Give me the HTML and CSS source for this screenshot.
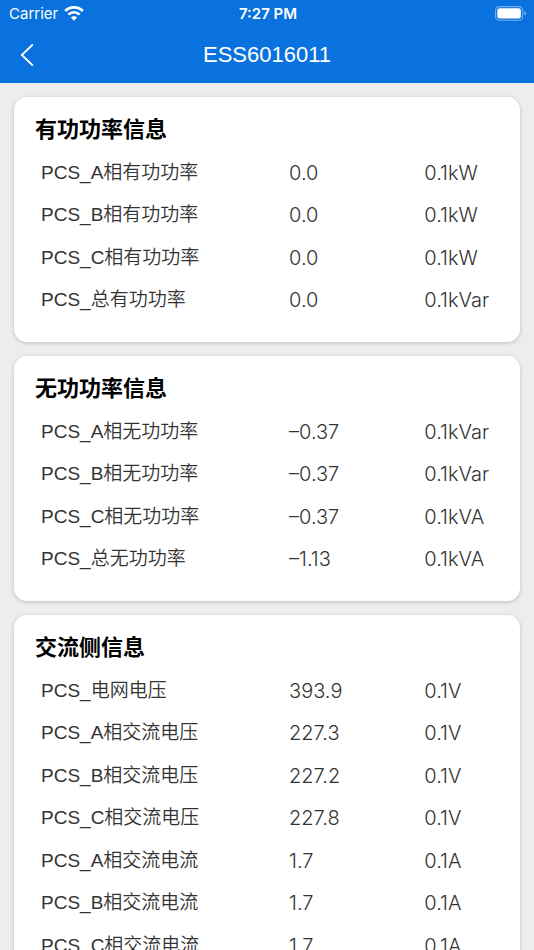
FILE: index.html
```
<!DOCTYPE html>
<html lang="zh-CN">
<head>
    <meta charset="UTF-8">
    <meta name="viewport" content="width=device-width, initial-scale=1.0">
    <title>ESS6016011</title>
    <link rel="stylesheet" href="styles.css">
</head>
<body>
    <header class="header">
        <div class="status-bar">
            <div class="status-left">
                <span>Carrier</span>
                <svg class="wifi" viewBox="0 0 20 15" width="20" height="15" aria-hidden="true">
                    <path d="M1.2 5.1a12.4 12.4 0 0 1 17.6 0" fill="none" stroke="#fff" stroke-width="2.8"/>
                    <path d="M4.4 8.6a7.9 7.9 0 0 1 11.2 0" fill="none" stroke="#fff" stroke-width="2.6"/>
                    <path d="M10 14.8L6.9 11.6a4.4 4.4 0 0 1 6.2 0z" fill="#fff"/>
                </svg>
            </div>
            <span class="status-time">7:27 PM</span>
            <div class="status-right">
                <svg class="battery" viewBox="0 0 32 15" width="32" height="15" aria-hidden="true">
                    <rect x="0.6" y="0.6" width="27" height="13.6" rx="3.8" fill="none" stroke="#fff" stroke-opacity="0.45" stroke-width="1.1"/>
                    <rect x="2.3" y="2.3" width="23.6" height="10.2" rx="2.3" fill="#fff"/>
                    <path d="M29.3 5.2c1 .4 1.6 1.2 1.6 2.2s-.6 1.8-1.6 2.2z" fill="#fff" fill-opacity="0.5"/>
                </svg>
            </div>
        </div>
        <div class="nav-bar">
            <button type="button" class="back" aria-label="返回">
                <svg viewBox="0 0 14 24" width="14" height="24" aria-hidden="true">
                    <path d="M12.8 1.5L1.8 12l11 10.5" fill="none" stroke="#fff" stroke-width="1.8"/>
                </svg>
            </button>
            <h1 class="nav-title">ESS6016011</h1>
        </div>
    </header>
    <main class="content">
        <section class="card">
            <h2>有功功率信息</h2>
            <table>
                <tr><th scope="row">PCS_A相有功功率</th><td>0.0</td><td>0.1kW</td></tr>
                <tr><th scope="row">PCS_B相有功功率</th><td>0.0</td><td>0.1kW</td></tr>
                <tr><th scope="row">PCS_C相有功功率</th><td>0.0</td><td>0.1kW</td></tr>
                <tr><th scope="row">PCS_总有功功率</th><td>0.0</td><td>0.1kVar</td></tr>
            </table>
        </section>
        <section class="card">
            <h2>无功功率信息</h2>
            <table>
                <tr><th scope="row">PCS_A相无功功率</th><td>–0.37</td><td>0.1kVar</td></tr>
                <tr><th scope="row">PCS_B相无功功率</th><td>–0.37</td><td>0.1kVar</td></tr>
                <tr><th scope="row">PCS_C相无功功率</th><td>–0.37</td><td>0.1kVA</td></tr>
                <tr><th scope="row">PCS_总无功功率</th><td>–1.13</td><td>0.1kVA</td></tr>
            </table>
        </section>
        <section class="card">
            <h2>交流侧信息</h2>
            <table>
                <tr><th scope="row">PCS_电网电压</th><td>393.9</td><td>0.1V</td></tr>
                <tr><th scope="row">PCS_A相交流电压</th><td>227.3</td><td>0.1V</td></tr>
                <tr><th scope="row">PCS_B相交流电压</th><td>227.2</td><td>0.1V</td></tr>
                <tr><th scope="row">PCS_C相交流电压</th><td>227.8</td><td>0.1V</td></tr>
                <tr><th scope="row">PCS_A相交流电流</th><td>1.7</td><td>0.1A</td></tr>
                <tr><th scope="row">PCS_B相交流电流</th><td>1.7</td><td>0.1A</td></tr>
                <tr><th scope="row">PCS_C相交流电流</th><td>1.7</td><td>0.1A</td></tr>
            </table>
        </section>
    </main>
</body>
</html>
```
FILE: styles.css
```
* {
    box-sizing: border-box;
}
body {
    margin: 0;
    height: 100vh;
    display: flex;
    flex-direction: column;
    background-color: #ededed;
    font-family: Inter, "Noto Sans CJK SC", sans-serif;
    color: #333;
}
.header {
    flex: none;
    background-color: #0972de;
    color: #fff;
}
.status-bar {
    display: grid;
    grid-template-columns: 1fr auto 1fr;
    align-items: center;
    height: 27px;
    padding: 0 7px 0 9px;
    font-size: 15px;
}
.status-left {
    display: flex;
    align-items: center;
    gap: 6px;
}
.status-time {
    font-weight: 600;
}
.status-right {
    display: flex;
    justify-content: flex-end;
}
.wifi, .battery, .back svg {
    display: block;
}
.nav-bar {
    display: grid;
    grid-template-columns: 54px 1fr 54px;
    align-items: center;
    height: 56px;
}
.back {
    height: 56px;
    padding: 0 20px;
    border: none;
    background: none;
    cursor: pointer;
}
.nav-title {
    margin: 0;
    font-family: "Liberation Sans", Arial, sans-serif;
    font-size: 22px;
    font-weight: 400;
    text-align: center;
}
.content {
    flex: 1;
    min-height: 0;
    padding: 14px;
    overflow-y: auto;
    scrollbar-width: none;
}
.card {
    margin-bottom: 14px;
    padding: 11px 28px 21px 27px;
    border-radius: 13px;
    background-color: #fff;
    box-shadow: 0 1px 4px rgba(0, 0, 0, 0.2);
}
.card h2 {
    margin: 0 0 0 -6px;
    color: #000;
    font-size: 22px;
    font-weight: 700;
    line-height: 43px;
}
table {
    width: 100%;
    table-layout: fixed;
    border-collapse: collapse;
}
th, td {
    width: 30%;
    height: 43px;
    padding: 0;
    font-size: 20px;
    font-weight: 350;
    line-height: 28px;
    text-align: left;
    white-space: nowrap;
}
th {
    width: 55%;
    font-family: "Liberation Sans", "Noto Sans CJK SC", sans-serif;
    font-size: 19px;
}
tr:nth-child(even) > * {
    height: 42px;
}
td:last-child {
    width: 15%;
}
```
